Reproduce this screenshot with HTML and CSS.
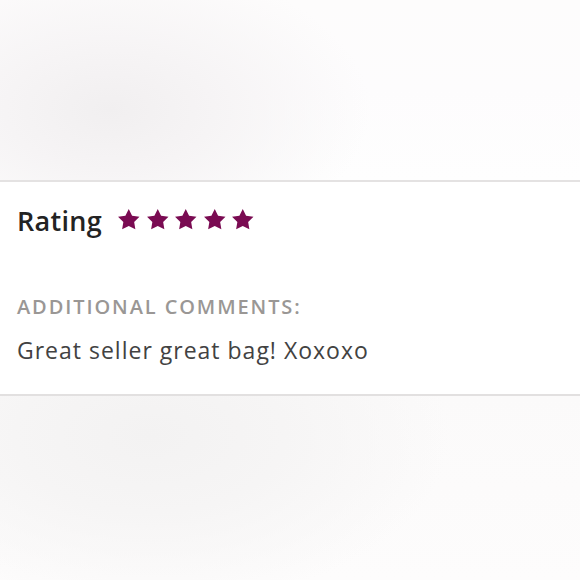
FILE: index.html
```html
<!DOCTYPE html>
<html>
<head>
<meta charset="utf-8">
<link rel="stylesheet" href="styles.css">
</head>
<body>
<div class="page">
  <div class="blur blur-top"></div>
  <section class="card">
    <div class="rating-row">
      <h2 class="rating-label">Rating</h2>
      <div class="stars">
        <svg class="star" viewBox="0 0 24 24"><path d="M12 1L15.41 7.81 22.94 8.95 17.52 14.29 18.76 21.8 12 18.3 5.24 21.8 6.48 14.29 1.06 8.95 8.59 7.81Z"/></svg>
        <svg class="star" viewBox="0 0 24 24"><path d="M12 1L15.41 7.81 22.94 8.95 17.52 14.29 18.76 21.8 12 18.3 5.24 21.8 6.48 14.29 1.06 8.95 8.59 7.81Z"/></svg>
        <svg class="star" viewBox="0 0 24 24"><path d="M12 1L15.41 7.81 22.94 8.95 17.52 14.29 18.76 21.8 12 18.3 5.24 21.8 6.48 14.29 1.06 8.95 8.59 7.81Z"/></svg>
        <svg class="star" viewBox="0 0 24 24"><path d="M12 1L15.41 7.81 22.94 8.95 17.52 14.29 18.76 21.8 12 18.3 5.24 21.8 6.48 14.29 1.06 8.95 8.59 7.81Z"/></svg>
        <svg class="star" viewBox="0 0 24 24"><path d="M12 1L15.41 7.81 22.94 8.95 17.52 14.29 18.76 21.8 12 18.3 5.24 21.8 6.48 14.29 1.06 8.95 8.59 7.81Z"/></svg>
      </div>
    </div>
    <h3 class="comments-label">ADDITIONAL COMMENTS:</h3>
    <p class="comment">Great seller great bag! Xoxoxo</p>
  </section>
  <div class="blur blur-bottom"></div>
</div>
</body>
</html>
```
FILE: styles.css
```css
html, body {
  margin: 0;
  padding: 0;
  background: #fff;
}
.page {
  width: 580px;
  height: 580px;
  display: flex;
  flex-direction: column;
  font-family: "Open Sans", "Liberation Sans", sans-serif;
  overflow: hidden;
}
.blur-top {
  height: 180px;
  flex: none;
  border-bottom: 2px solid #e4e2e2;
  background:
    radial-gradient(ellipse 260px 150px at 110px 110px, #f1eff0 0%, #f6f4f5 40%, rgba(250,249,250,0) 100%),
    linear-gradient(180deg, #fdfcfc 0%, #fdfcfd 50%, #fefefe 100%);
}
.card {
  flex: none;
  height: 214px;
  box-sizing: border-box;
  padding: 19px 17px 0;
  background: #fff;
  border-bottom: 2px solid #e2e0e0;
}
.rating-row {
  display: flex;
  align-items: center;
  gap: 15px;
}
.rating-label {
  margin: 0;
  font-size: 27px;
  font-weight: 600;
  letter-spacing: 0.3px;
  color: #232323;
  line-height: 40px;
}
.stars {
  display: flex;
  gap: 5px;
  margin-top: -2px;
}
.star {
  width: 23.5px;
  height: 23.5px;
  fill: #7a0b52;
}
.comments-label {
  margin: 53px 0 0;
  font-size: 20px;
  font-weight: 600;
  letter-spacing: 1.9px;
  color: #9a9795;
  line-height: 26px;
}
.comment {
  margin: 16px 0 0;
  font-size: 23px;
  letter-spacing: 1px;
  color: #424242;
  line-height: 28px;
}
.blur-bottom {
  flex: 1;
  background:
    radial-gradient(ellipse 300px 170px at 150px 40px, #f3f2f2 0%, #f6f5f5 45%, rgba(250,249,249,0) 100%),
    linear-gradient(180deg, #fbfafa 0%, #fdfcfc 100%);
}
```
